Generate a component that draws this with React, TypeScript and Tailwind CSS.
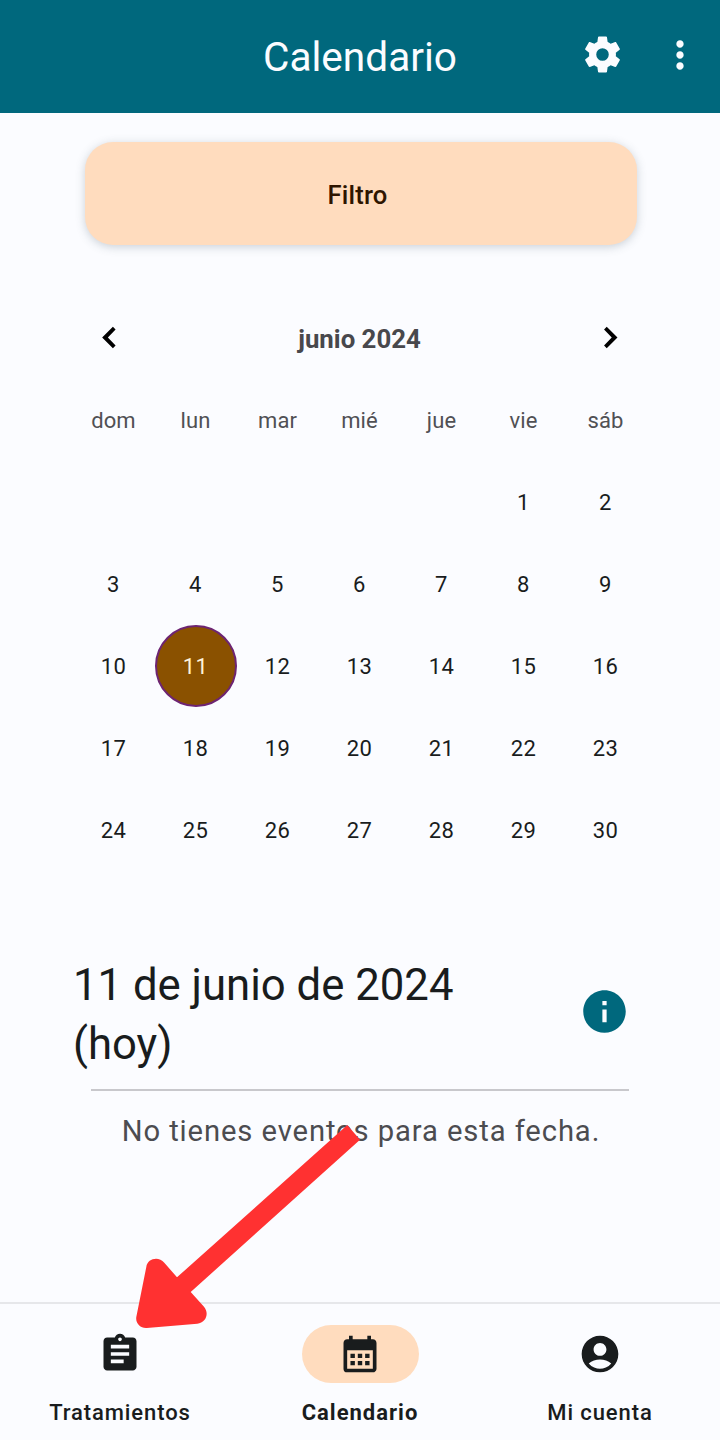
import React from "react";

function Icon({ d, className }: { d: string; className: string }) {
  return (
    <svg viewBox="0 0 24 24" fill="currentColor" className={className} aria-hidden="true">
      <path d={d} />
    </svg>
  );
}

const ICONS = {
  cog: "M12,15.5A3.5,3.5 0 0,1 8.5,12A3.5,3.5 0 0,1 12,8.5A3.5,3.5 0 0,1 15.5,12A3.5,3.5 0 0,1 12,15.5M19.43,12.97C19.47,12.65 19.5,12.33 19.5,12C19.5,11.67 19.47,11.34 19.43,11L21.54,9.37C21.73,9.22 21.78,8.95 21.66,8.73L19.66,5.27C19.54,5.05 19.27,4.96 19.05,5.05L16.56,6.05C16.04,5.66 15.5,5.32 14.87,5.07L14.5,2.42C14.46,2.18 14.25,2 14,2H10C9.75,2 9.54,2.18 9.5,2.42L9.13,5.07C8.5,5.32 7.96,5.66 7.44,6.05L4.95,5.05C4.73,4.96 4.46,5.05 4.34,5.27L2.34,8.73C2.21,8.95 2.27,9.22 2.46,9.37L4.57,11C4.53,11.34 4.5,11.67 4.5,12C4.5,12.33 4.53,12.65 4.57,12.97L2.46,14.63C2.27,14.78 2.21,15.05 2.34,15.27L4.34,18.73C4.46,18.95 4.73,19.03 4.95,18.95L7.44,17.94C7.96,18.34 8.5,18.68 9.13,18.93L9.5,21.58C9.54,21.82 9.75,22 10,22H14C14.25,22 14.46,21.82 14.5,21.58L14.87,18.93C15.5,18.67 16.04,18.34 16.56,17.94L19.05,18.95C19.27,19.03 19.54,18.95 19.66,18.73L21.66,15.27C21.78,15.05 21.73,14.78 21.54,14.63L19.43,12.97Z",
  more: "M12 8c1.1 0 2-.9 2-2s-.9-2-2-2-2 .9-2 2 .9 2 2 2zm0 2c-1.1 0-2 .9-2 2s.9 2 2 2 2-.9 2-2-.9-2-2-2zm0 6c-1.1 0-2 .9-2 2s.9 2 2 2 2-.9 2-2-.9-2-2-2z",
  left: "M15.4 7.6L13.9 6l-6 6 6 6 1.5-1.6L11.1 12z",
  right: "M8.4 16.4L9.9 18l6-6-6-6-1.5 1.6L12.7 12z",
  info: "M12 2C6.48 2 2 6.48 2 12s4.48 10 10 10 10-4.48 10-10S17.52 2 12 2zm1 15h-2v-6h2v6zm0-8h-2V7h2v2z",
  clipboard:
    "M19 3h-4.18C14.4 1.84 13.3 1 12 1c-1.3 0-2.4.84-2.82 2H5c-1.1 0-2 .9-2 2v14c0 1.1.9 2 2 2h14c1.1 0 2-.9 2-2V5c0-1.1-.9-2-2-2zm-7 0c.55 0 1 .45 1 1s-.45 1-1 1-1-.45-1-1 .45-1 1-1zm2 14H7v-2h7v2zm3-4H7v-2h10v2zm0-4H7V7h10v2z",
  calendar:
    "M19 4h-1V2h-2v2H8V2H6v2H5c-1.11 0-1.99.9-1.99 2L3 20a2 2 0 0 0 2 2h14c1.1 0 2-.9 2-2V6c0-1.1-.9-2-2-2zm0 16H5V10h14v10zM9.2 14.2H6.8v-2.4h2.4v2.4zm4 0h-2.4v-2.4h2.4v2.4zm4 0h-2.4v-2.4h2.4v2.4zm-8 4H6.8v-2.4h2.4v2.4zm4 0h-2.4v-2.4h2.4v2.4zm4 0h-2.4v-2.4h2.4v2.4z",
  account:
    "M12 2C6.48 2 2 6.48 2 12s4.48 10 10 10 10-4.48 10-10S17.52 2 12 2zm0 4c1.93 0 3.5 1.57 3.5 3.5S13.93 13 12 13s-3.5-1.57-3.5-3.5S10.07 6 12 6zm0 14c-2.03 0-4.43-.82-6.14-2.88C7.55 15.8 9.68 15 12 15s4.45.8 6.14 2.12C16.43 19.18 14.03 20 12 20z",
};

const WEEKDAYS = ["dom", "lun", "mar", "mié", "jue", "vie", "sáb"];
const LEADING_BLANKS = 5;
const DAYS = Array.from({ length: 30 }, (_, i) => i + 1);
const TODAY = 11;

function Header() {
  return (
    <header className="flex h-[113px] shrink-0 items-center bg-[#00687d] pb-1 text-[#fbfcff]">
      <div className="w-[240px]" />
      <h1 className="w-[240px] pt-1 text-center text-[40.6px] leading-[48px]">Calendario</h1>
      <button className="ml-[100.5px]">
        <Icon d={ICONS.cog} className="size-[43px]" />
      </button>
      <button className="ml-[34px]">
        <Icon d={ICONS.more} className="size-[44px]" />
      </button>
    </header>
  );
}

function Month() {
  return (
    <section className="mt-[66px] ml-[73px] w-[574px]">
      <div className="flex h-[68px] items-center justify-between pr-[15px] pb-[8px] pl-[15px] text-black">
        <button className="pb-2">
          <Icon d={ICONS.left} className="size-[43px]" />
        </button>
        <h2 className="pr-[1px] pb-1 text-[25.8px] leading-8 font-bold text-[#48484c]">junio 2024</h2>
        <button className="pb-2">
          <Icon d={ICONS.right} className="size-[43px]" />
        </button>
      </div>
      <div className="grid auto-rows-[82px] grid-cols-7 text-[22px] tracking-[0.5px] text-[#191c1d]">
        {WEEKDAYS.map((name) => (
          <div key={name} className="flex items-center justify-center pr-[1px] tracking-[0.1px] text-[#505054]">
            {name}
          </div>
        ))}
        {Array.from({ length: LEADING_BLANKS }, (_, i) => (
          <div key={`blank-${i}`} />
        ))}
        {DAYS.map((day) => (
          <div
            key={day}
            className={
              day === TODAY
                ? "flex items-center justify-center rounded-full border-2 border-[#6d2472] bg-[#8a5100] pr-[1px] text-[#fff3dc]"
                : "flex items-center justify-center pr-[1px]"
            }
          >
            {day}
          </div>
        ))}
      </div>
    </section>
  );
}

function NavItem({ icon, label, active = false }: { icon: string; label: string; active?: boolean }) {
  return (
    <button className="flex w-[240px] flex-col items-center pt-[21px] text-[#191c1d]">
      <span
        className={
          active
            ? "flex h-[58px] w-[117px] items-center justify-center rounded-full bg-[#ffdcbe]"
            : "flex h-[58px] w-[117px] items-center justify-center"
        }
      >
        <Icon d={icon} className="size-[44px]" />
      </span>
      <span
        className={
          active
            ? "mt-[15px] text-[22px] leading-[30px] font-bold tracking-[1px]"
            : "mt-[15px] text-[22px] leading-[30px] font-medium tracking-[0.9px]"
        }
      >
        {label}
      </span>
    </button>
  );
}

export default function App() {
  return (
    <div className="relative flex h-[1440px] w-[720px] flex-col overflow-hidden bg-[#fbfcff] font-[Roboto,sans-serif]">
      <Header />
      <main className="flex flex-1 flex-col">
        <button className="mt-[29px] ml-[85px] flex h-[103px] w-[552px] items-center justify-center rounded-[28px] bg-[#ffdcbe] pt-[3px] pr-[7px] text-[25.6px] font-medium tracking-[0.2px] text-[#2e1500] shadow-[0_2px_10px_rgba(60,80,95,0.25)]">
          Filtro
        </button>
        <Month />
        <section className="mt-[85px] ml-[73px] w-[574px]">
          <div className="flex items-center justify-between">
            <h2 className="w-[440px] text-[43.7px] leading-[58.5px] text-[#191c1d]">11 de junio de 2024 (hoy)</h2>
            <button className="mr-[17px] pb-[6px] text-[#00687d]">
              <Icon d={ICONS.info} className="size-[51px]" />
            </button>
          </div>
          <hr className="mt-[16px] ml-[18px] w-[538px] border-t-2 border-[#c8c8cc]" />
          <p className="mt-[20px] pl-[2px] text-center text-[29.2px] leading-[40px] tracking-[0.9px] text-[#4c4c50]">
            No tienes eventos para esta fecha.
          </p>
        </section>
      </main>
      <nav className="flex h-[138px] shrink-0 border-t-2 border-[#e6e7ea]">
        <NavItem icon={ICONS.clipboard} label="Tratamientos" />
        <NavItem icon={ICONS.calendar} label="Calendario" active />
        <NavItem icon={ICONS.account} label="Mi cuenta" />
      </nav>
      <svg
        viewBox="130 1120 240 215"
        className="pointer-events-none absolute top-[1120px] left-[130px] h-[215px] w-[240px]"
        aria-hidden="true"
      >
        <path
          fill="#ff3131"
          d="M347.3 1125L360 1139.8L190.7 1292L204 1306.7C209.5 1313.5 206 1323 197.3 1323.7L146.7 1328C140.5 1328.5 135.3 1323 136.3 1317L146.3 1267C147.5 1258.5 158.5 1256 164.3 1262.7L177 1277.3Z"
        />
      </svg>
    </div>
  );
}
